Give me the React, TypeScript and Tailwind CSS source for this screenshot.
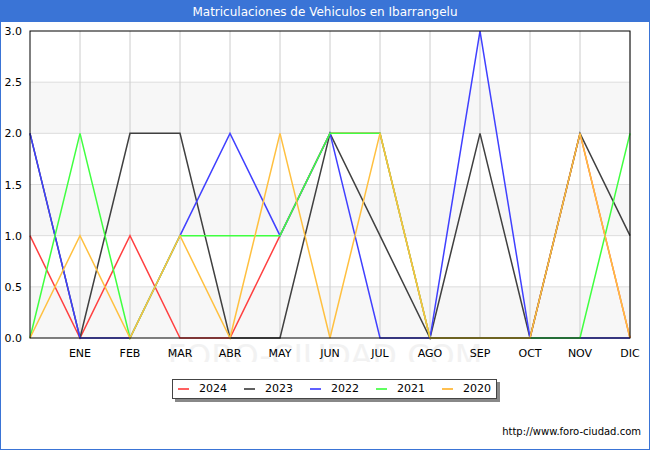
const X = (i: number) => 30 + i * 50;
const Y = (v: number) => 337 - v * 102.33;

// drawn in order: first one ends up underneath
const series = [
  { name: "2024", color: "#ff4040", data: [1, 0, 1, 0, 0, 1, 2, 2, 0, 0, 0, 2, 0] },
  { name: "2023", color: "#404040", data: [2, 0, 2, 2, 0, 0, 2, 1, 0, 2, 0, 2, 1] },
  { name: "2022", color: "#4040ff", data: [2, 0, 0, 1, 2, 1, 2, 0, 0, 3, 0, 0, 0] },
  { name: "2021", color: "#40ff40", data: [0, 2, 0, 1, 1, 1, 2, 2, 0, 0, 0, 0, 2] },
  { name: "2020", color: "#ffc040", data: [0, 1, 0, 1, 0, 2, 0, 2, 0, 0, 0, 2, 0] },
];
const months = ["ENE", "FEB", "MAR", "ABR", "MAY", "JUN", "JUL", "AGO", "SEP", "OCT", "NOV", "DIC"];
const legend = [
  { name: "2024", color: "bg-[#ff6060]" },
  { name: "2023", color: "bg-[#606060]" },
  { name: "2022", color: "bg-[#6060ff]" },
  { name: "2021", color: "bg-[#60ff60]" },
  { name: "2020", color: "bg-[#ffc050]" },
];

export default function App() {
  return (
    <div className="w-[650px] h-[450px] border border-[#3a74d6] bg-white flex flex-col" style={{ fontFamily: "'DejaVu Sans', sans-serif" }}>
      <div className="h-[21px] bg-[#3a74d6] text-white text-[12px] flex items-center justify-center shrink-0">
        Matriculaciones de Vehiculos en Ibarrangelu
      </div>
      <svg width="648" height="340" viewBox="1 21 648 340" className="shrink-0">
        {[0, 1, 2].map((k) => (
          <rect key={k} x={30} y={Y(k + 0.5)} width={600} height={51.17} fill="#f7f7f7" />
        ))}
        {[0.5, 1, 1.5, 2, 2.5].map((v) => (
          <line key={v} x1={30} x2={630} y1={Y(v)} y2={Y(v)} stroke="#dddddd" strokeWidth={1} />
        ))}
        {months.map((_, i) => (
          <line key={i} x1={X(i + 1)} x2={X(i + 1)} y1={30} y2={337} stroke="#cccccc" strokeWidth={1} />
        ))}
        <text x={325} y={366} textAnchor="middle" fontSize={32} fill="#f2f2f2" fontFamily="DejaVu Sans">FORO-CIUDAD.COM</text>
        {series.map((s) => (
          <polyline key={s.name} fill="none" stroke={s.color} strokeWidth={1.5} points={s.data.map((v, i) => `${X(i)},${Y(v)}`).join(" ")} />
        ))}
        <rect x={30} y={30} width={600} height={307} fill="none" stroke="#000" strokeWidth={1} />
        {[0, 0.5, 1, 1.5, 2, 2.5, 3].map((v) => (
          <text key={v} x={22} y={Y(v) + 4} textAnchor="end" fontSize={11} fill="#000">{v.toFixed(1)}</text>
        ))}
        {months.map((m, i) => (
          <text key={m} x={X(i + 1)} y={356} textAnchor="middle" fontSize={11} fill="#000">{m}</text>
        ))}
      </svg>
      <div className="flex justify-start pl-[171px] mt-[17px]">
        <div className="flex items-center gap-[17px] border border-[#444] h-[20px] px-[5px] text-[11px] shadow-[3px_3px_0_#888]">
          {legend.map((l) => (
            <div key={l.name} className="flex items-center gap-[10px]">
              <span className={`w-[11px] h-[2px] ${l.color}`} />
              <span>{l.name}</span>
            </div>
          ))}
        </div>
      </div>
      <div className="mt-auto mb-[10px] pr-[8px] text-right text-[10px] text-black">http://www.foro-ciudad.com</div>
    </div>
  );
}
